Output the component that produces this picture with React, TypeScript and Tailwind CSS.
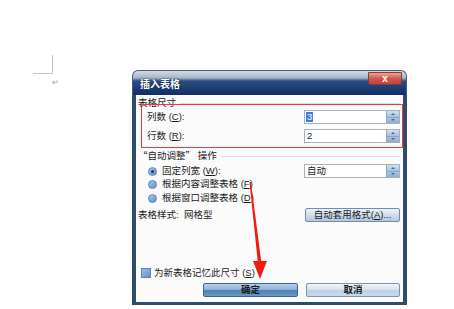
import React from "react";

// accelerator letter, underlined like a Win32 dialog label
function Acc({ k }: { k: string }) {
  return (
    <span>
      (<span className="underline">{k}</span>)
    </span>
  );
}

function Spinner() {
  return (
    <div className="flex w-[13px] flex-col border-l border-[#8aa6c4]">
      <div className="flex flex-1 items-center justify-center border-b border-[#87a6c8] bg-gradient-to-b from-[#d3e2f2] to-[#a4bfdd]">
        <span className="block h-0 w-0 border-x-[2px] border-b-[2px] border-x-transparent border-b-[#4b6a8e]" />
      </div>
      <div className="flex flex-1 items-center justify-center bg-gradient-to-b from-[#a9c3e0] to-[#8eaed3]">
        <span className="block h-0 w-0 border-x-[2px] border-t-[2px] border-x-transparent border-t-[#4b6a8e]" />
      </div>
    </div>
  );
}

function Field({ value, selected }: { value: string; selected?: boolean }) {
  return (
    <div className="flex h-[14px] w-[96px] border border-[#a7b1bc] bg-white">
      <div className="flex flex-1 items-center pl-[1px]">
        <span className={selected ? "bg-[#3b7de0] px-[1px] leading-[10px] text-white" : "px-[1px] leading-[10px] text-[#222]"}>
          {value}
        </span>
      </div>
      <Spinner />
    </div>
  );
}

function Radio({ checked }: { checked?: boolean }) {
  return (
    <span className="flex h-[9px] w-[9px] items-center justify-center rounded-full border border-[#5a86b5] bg-gradient-to-br from-[#a8c8e8] to-[#5f92c6]">
      {checked && <span className="block h-[3px] w-[3px] rounded-full bg-[#16325a]" />}
    </span>
  );
}

function Section({ children }: { children: React.ReactNode }) {
  return (
    <div className="flex h-[14px] items-center">
      <span>{children}</span>
      <div className="ml-[4px] h-px flex-1 bg-[#d6dde4]" />
    </div>
  );
}

export default function App() {
  return (
    <div className="relative h-[309px] w-[454px] overflow-hidden bg-white font-['Liberation_Sans','Noto_Sans_CJK_SC',sans-serif] text-[9.5px] text-[#1b1b1b]">
      {/* word document page corner + paragraph mark */}
      <div className="pl-[33px] pt-[55px]">
        <div className="h-[19px] w-[20px] border-b border-r border-[#c4c4c4]" />
        <div className="ml-[19px] mt-[5px] text-[8px] leading-[8px] text-[#9a9a9a]">↵</div>
      </div>

      {/* insert table dialog */}
      <div className="absolute left-[132px] top-[70px] flex h-[235px] w-[275px] flex-col">
        <div className="flex h-[25px] justify-between rounded-t-[6px] border-x border-t border-[#4a6079] bg-[linear-gradient(to_bottom,#d4dbe3_0%,#aab7c6_28%,#2c4c80_42%,#0f2d68_100%)]">
          <span className="self-center pl-[7px] pt-[2px] text-[10px] font-bold text-white [text-shadow:0_0_2px_#0a1e44]">
            插入表格
          </span>
          <div className="mr-[4px] mt-[1px] flex h-[13px] w-[34px] items-center justify-center rounded-b-[3px] border border-[#8a3b35] bg-gradient-to-b from-[#e9a59d] via-[#d0584c] to-[#c0453a] text-[10px] font-bold leading-none text-white">
            x
          </div>
        </div>

        <div className="flex flex-1 flex-col border-x-[4px] border-b-[3px] border-[#2f4c68] bg-[#fbfbfb] pl-[2px] pr-[3px] pb-[5px] pt-[1px]">
          <Section>表格尺寸</Section>

          <div className="flex h-[14px] items-center justify-between">
            <span className="ml-[9px]">
              列数 <Acc k="C" />:
            </span>
            <Field value="3" selected />
          </div>
          <div className="mt-[5px] flex h-[14px] items-center justify-between">
            <span className="ml-[9px]">
              行数 <Acc k="R" />:
            </span>
            <Field value="2" />
          </div>

          <div className="mt-[6px]">
            <Section>
              <span className="font-['Noto_Sans_CJK_SC',sans-serif]">“自动调整”</span> 操作
            </Section>
          </div>

          <div className="mt-[1px] flex h-[14px] items-center justify-between">
            <div className="ml-[10px] flex items-center gap-[5px]">
              <Radio checked />
              <span>
                固定列宽 <Acc k="W" />:
              </span>
            </div>
            <Field value="自动" />
          </div>
          <div className="flex h-[13px] items-center">
            <div className="ml-[10px] flex items-center gap-[5px]">
              <Radio />
              <span>
                根据内容调整表格 <Acc k="F" />
              </span>
            </div>
          </div>
          <div className="flex h-[14px] items-center">
            <div className="ml-[10px] flex items-center gap-[5px]">
              <Radio />
              <span>
                根据窗口调整表格 <Acc k="D" />
              </span>
            </div>
          </div>

          <div className="mt-[3px] flex h-[14px] items-center justify-between">
            <span>表格样式:&nbsp;&nbsp;网格型</span>
            <button className="flex h-[14px] w-[95px] items-center justify-center rounded-[2px] border border-[#6f8daa] bg-gradient-to-b from-[#eef3f9] to-[#b3c8de]">
              自动套用格式 <Acc k="A" />...
            </button>
          </div>

          <div className="flex-1" />

          <div className="flex h-[12px] items-center">
            <span className="ml-[3px] block h-[10px] w-[10px] border border-[#5f87b2] bg-gradient-to-br from-[#9ebfe0] to-[#6494c6]" />
            <span className="ml-[3px]">
              为新表格记忆此尺寸 <Acc k="S" />
            </span>
          </div>

          <div className="mt-[4px] flex h-[14px] justify-end gap-[8px]">
            <button className="flex h-[14px] w-[95px] items-center justify-center rounded-[2px] border border-[#3d6593] bg-[linear-gradient(to_bottom,#b5d0ec_0%,#8fb3da_45%,#4f7fb3_55%,#6c97c6_100%)] font-bold">
              确定
            </button>
            <button className="flex h-[14px] w-[94px] items-center justify-center rounded-[2px] border border-[#7b96b2] bg-[linear-gradient(to_bottom,#f1f5fa_0%,#d8e4f0_45%,#bdd0e4_55%,#c9d9ea_100%)] font-bold">
              取消
            </button>
          </div>
        </div>
      </div>

      {/* red annotation box around the size fields */}
      <div className="absolute left-[141px] top-[104px] h-[44px] w-[262px] border border-[#ee3b33]" />

      {/* red annotation arrow */}
      <svg className="absolute left-0 top-0" width="454" height="309" viewBox="0 0 454 309">
        <polygon points="249.5,182 251,182 261.5,264 258,264" fill="#f21b12" />
        <polygon points="253,261 267,261 260,279" fill="#f21b12" />
      </svg>
    </div>
  );
}
